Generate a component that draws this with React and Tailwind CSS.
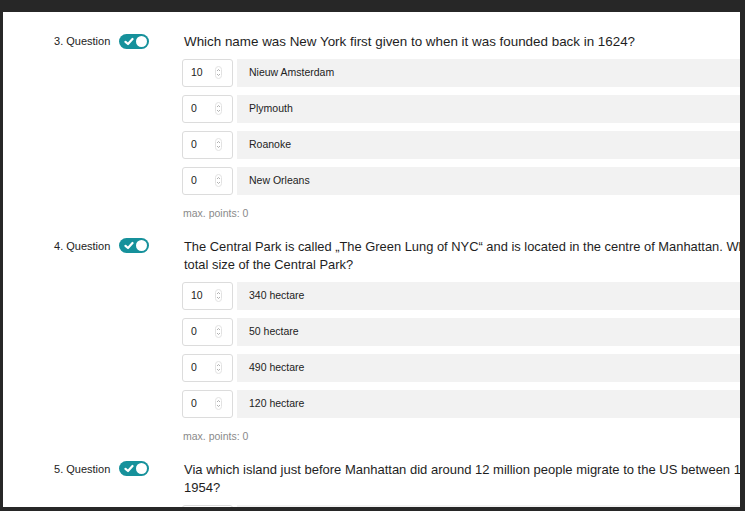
import React from "react";

const questions = [
  {
    n: 3,
    size: "text-[13.4px]",
    text: "Which name was New York first given to when it was founded back in 1624?",
    answers: [
      ["10", "Nieuw Amsterdam"],
      ["0", "Plymouth"],
      ["0", "Roanoke"],
      ["0", "New Orleans"],
    ],
  },
  {
    n: 4,
    size: "text-[12.9px]",
    text: "The Central Park is called \u201EThe Green Lung of NYC\u201C and is located in the centre of Manhattan. What is the total size of the Central Park?",
    answers: [
      ["10", "340 hectare"],
      ["0", "50 hectare"],
      ["0", "490 hectare"],
      ["0", "120 hectare"],
    ],
  },
  {
    n: 5,
    size: "text-[13px]",
    text: "Via which island just before Manhattan did around 12 million people migrate to the US between 1892 and 1954?",
    answers: [
      ["10", "Ellis Island"],
      ["0", "Staten Island"],
    ],
  },
];

function Toggle() {
  return (
    <div className="relative w-[30px] h-[15px] rounded-full bg-[#16919b] shrink-0">
      <svg className="absolute left-[5px] top-[3px]" width="10" height="9" viewBox="0 0 10 9">
        <path d="M1.5 4.8 L4 7 L8.5 2" fill="none" stroke="white" strokeWidth="2.2" strokeLinecap="round" strokeLinejoin="round" />
      </svg>
      <div className="absolute right-[2px] top-[2px] w-[11px] h-[11px] rounded-full bg-white" />
    </div>
  );
}

function Spinner() {
  return (
    <svg width="7" height="13" viewBox="0 0 7 13">
      <rect x="0.5" y="0.5" width="6" height="12" rx="3" fill="none" stroke="#e2e2e2" strokeWidth="1" />
      <path d="M2 5 L3.5 3.5 L5 5" fill="none" stroke="#a8a8a8" strokeWidth="0.9" />
      <path d="M2 8 L3.5 9.5 L5 8" fill="none" stroke="#a8a8a8" strokeWidth="0.9" />
    </svg>
  );
}

function AnswerRow({ points, label }) {
  return (
    <div className="flex items-stretch h-[28px]">
      <div className="w-[51px] shrink-0 border border-[#dcdcdc] rounded-[3px] bg-white flex items-center justify-between pl-[8px] pr-[10px] text-[10.5px] text-[#222]">
        <span>{points}</span>
        <Spinner />
      </div>
      <div className="flex-1 ml-[4px] bg-[#f2f2f2] flex items-center pl-[12px] text-[10.5px] text-[#222]">
        {label}
      </div>
    </div>
  );
}

function Question({ q }) {
  return (
    <div className="flex">
      <div className="w-[179px] shrink-0 flex items-start pl-[51px] pt-[1px]">
        <span className="text-[11px] leading-[14px] text-[#222] w-[65px]">{q.n}. Question</span>
        <div className="mt-[-0.5px]">
          <Toggle />
        </div>
      </div>
      <div className="flex-1">
        <div className={`pl-[2px] w-[630px] leading-[18.5px] text-[#1e1e1e] ${q.size}`}>{q.text}</div>
        <div className="mt-[7px] flex flex-col gap-[8px]">
          {q.answers.map((a, i) => (
            <AnswerRow key={i} points={a[0]} label={a[1]} />
          ))}
        </div>
        <div className="mt-[12px] pl-[1px] text-[10.5px] leading-[12px] text-[#8a8a8a]">max. points: 0</div>
      </div>
    </div>
  );
}

export default function App() {
  return (
    <div
      className="w-[745px] h-[511px] bg-[#272727] pt-[12px] pl-[3px] pr-[5px] pb-[4px]"
      style={{ fontFamily: '"Liberation Sans", Arial, sans-serif' }}
    >
      <div className="h-full bg-white overflow-hidden">
        <div className="w-[1000px] pt-[21px] flex flex-col gap-[19px]">
          {questions.map((q) => (
            <Question key={q.n} q={q} />
          ))}
        </div>
      </div>
    </div>
  );
}
